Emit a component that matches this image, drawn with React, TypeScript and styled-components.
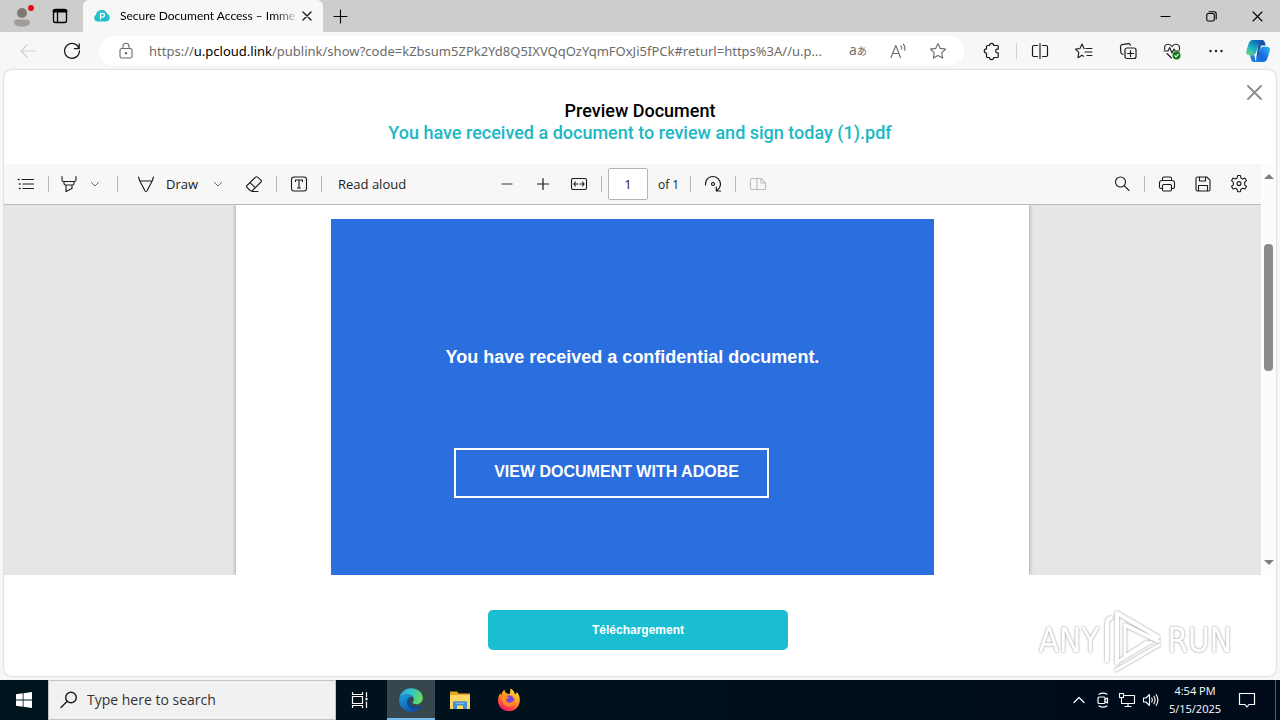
import React from "react";
import styled, { createGlobalStyle, css } from "styled-components";

const ui = `"Open Sans", "Noto Sans", sans-serif`;

const GlobalStyle = createGlobalStyle`
  *, *::before, *::after { box-sizing: border-box; }
  body { margin: 0; background: #f7f7f7; font-family: ${ui}; color: #1b1b1b; }
  button { border: 0; padding: 0; background: none; font: inherit; color: inherit; cursor: pointer; }
`;

const Desktop = styled.div`
  display: flex;
  flex-direction: column;
  min-height: 100vh;
`;

/* ---------- shared ---------- */

const IconButton = styled.button<{ $w?: number; $h?: number; $color?: string }>`
  display: flex;
  flex: none;
  align-items: center;
  justify-content: center;
  width: ${(p) => p.$w ?? 36}px;
  height: ${(p) => p.$h ?? 32}px;
  color: ${(p) => p.$color ?? "#1b1b1b"};
`;

type IconProps = { size?: number; w?: number; children: React.ReactNode };

const Icon = ({ size = 20, w = 1.1, children }: IconProps) => (
  <svg
    width={size}
    height={size}
    viewBox={`0 0 ${size} ${size}`}
    fill="none"
    stroke="currentColor"
    strokeWidth={w}
    strokeLinecap="round"
    strokeLinejoin="round"
    aria-hidden="true"
  >
    {children}
  </svg>
);

/* ---------- title bar ---------- */

const TitleBar = styled.header`
  display: flex;
  height: 32px;
  background: #cdcdcd;
`;

const Tab = styled.div`
  display: flex;
  align-items: center;
  width: 240px;
  margin-left: 7px;
  padding: 0 4px 0 11px;
  border-radius: 6px 6px 0 0;
  background: #f7f7f7;
`;

const TabTitle = styled.span`
  flex: 1;
  min-width: 0;
  margin-left: 10px;
  overflow: hidden;
  white-space: nowrap;
  font-family: Lato, "Open Sans", sans-serif;
  font-size: 12px;
  line-height: 16px;
  color: #000;
  mask-image: linear-gradient(to right, #000 88%, rgba(0, 0, 0, 0.2));
`;

const WindowControls = styled.div`
  display: flex;
  margin-left: auto;
`;

/* ---------- address row ---------- */

const AddressRow = styled.nav`
  display: flex;
  align-items: center;
  height: 37px;
  padding: 0 2px 0 6px;
`;

const AddressBar = styled.div`
  display: flex;
  flex: 1;
  align-items: center;
  min-width: 0;
  height: 30px;
  margin: 0 6px 0 5px;
  padding: 0 6px 0 4px;
  border-radius: 15px;
  background: #fff;
`;

const Url = styled.div`
  flex: 1;
  min-width: 0;
  padding-right: 4px;
  overflow: hidden;
  text-overflow: ellipsis;
  white-space: nowrap;
  font-family: "Noto Sans", "Open Sans", sans-serif;
  font-size: 13px;
  line-height: 20px;
  color: #6b6b6b;

  b { font-weight: 400; color: #000; }
`;

const Translate = styled.span`
  font-family: "Open Sans", "Noto Sans CJK JP", sans-serif;
  font-size: 14px;
  line-height: 16px;
  small { font-size: 10px; }
`;

const Divider = styled.span<{ $w?: number; $gap?: number; $color?: string }>`
  display: flex;
  flex: none;
  justify-content: center;
  width: ${(p) => p.$w ?? 9}px;
  height: 16px;
  margin-left: ${(p) => p.$gap ?? 0}px;

  &::before {
    content: "";
    width: 1px;
    background: ${(p) => p.$color ?? "#b8b8b8"};
  }
`;

/* ---------- preview dialog ---------- */

const Dialog = styled.main`
  display: flex;
  flex: 1;
  flex-direction: column;
  margin: 1px 4px 4px;
  border-radius: 8px;
  background: #fff;
  box-shadow: 0 0 2px rgba(0, 0, 0, 0.3);
`;

const DialogHeader = styled.div`
  display: grid;
  grid-template-columns: 1fr auto 1fr;
  height: 94px;
  padding-top: 30px;
`;

const DialogTitle = styled.h1`
  grid-column: 2;
  margin: 0;
  text-align: center;
  font: 500 18px/22px Roboto, sans-serif;
  color: #000;

  span { display: block; color: #20b7c4; }
`;

const CloseSlot = styled.div`
  justify-self: end;
  margin: -24px 6px 0 0;
`;

const Viewer = styled.section`
  display: flex;
  flex: 1;
  min-height: 411px;
`;

const ViewerMain = styled.div`
  display: flex;
  flex: 1;
  flex-direction: column;
  min-width: 0;
`;

const PdfToolbar = styled.div`
  display: grid;
  grid-template-columns: 1fr auto 1fr;
  height: 41px;
  padding: 0 4px;
  border-bottom: 1px solid #bcbcbc;
  background: #f7f7f7;
  font-size: 13px;
`;

const ToolGroup = styled.div<{ $end?: boolean }>`
  display: flex;
  align-items: center;
  justify-content: ${(p) => (p.$end ? "flex-end" : "flex-start")};
`;

const ToolButton = styled.button`
  display: flex;
  align-items: center;
  height: 32px;
  white-space: nowrap;
`;

const DrawButton = styled(ToolButton)`
  width: 80px;
  margin-left: 6px;
  padding-left: 8px;
  gap: 10px;
`;

const EraseButton = styled(IconButton)`
  margin-left: 8px;
`;

const ReadAloud = styled(ToolButton)`
  margin-left: 12px;
`;

const PageInput = styled.input`
  width: 40px;
  height: 32px;
  margin-left: 2px;
  padding: 0;
  border: 1px solid #b5b5b5;
  border-radius: 2px;
  background: #fff;
  text-align: center;
  font: 13px/20px ${ui};
  color: #1b1b1b;
`;

const PageCount = styled.span`
  width: 20px;
  margin: 0 8px 0 10px;
  white-space: nowrap;
  font-size: 12px;
`;

const PdfCanvas = styled.div`
  display: flex;
  flex: 1;
  justify-content: center;
  overflow: hidden;
  background: #e6e6e6;
`;

const PdfPage = styled.article`
  display: flex;
  justify-content: center;
  width: 793px;
  padding-top: 14px;
  background: #fff;
  box-shadow: 0 0 4px rgba(0, 0, 0, 0.4);
`;

const BluePanel = styled.div`
  display: flex;
  flex-direction: column;
  align-items: center;
  width: 603px;
  padding-top: 126px;
  background: #2b6ede;
  color: #fff;
  font-family: "Liberation Sans", Arial, sans-serif;
`;

const PdfHeading = styled.h2`
  margin: 0;
  font-size: 18px;
  line-height: 24px;
`;

const AdobeLink = styled.a`
  width: 315px;
  height: 50px;
  margin: 79px 42px 0 0;
  padding-left: 10px;
  border: 2px solid #fff;
  text-align: center;
  text-decoration: none;
  font-size: 16px;
  font-weight: 700;
  line-height: 44px;
  color: #fff;
`;

const ScrollTrack = styled.div`
  display: flex;
  flex: none;
  flex-direction: column;
  align-items: center;
  width: 15px;
  padding: 10px 0;
  background: #fcfcfc;
`;

const ScrollThumb = styled.div`
  width: 9px;
  height: 127px;
  margin: 65px 0 auto;
  border-radius: 4px;
  background: #8b8b8b;
`;

const ScrollArrow = styled.span<{ $down?: boolean }>`
  width: 0;
  height: 0;
  border: 5px solid transparent;
  ${(p) =>
    p.$down
      ? css`border-top-color: #7f7f7f; border-bottom: 0;`
      : css`border-bottom-color: #7f7f7f; border-top: 0;`}
`;

const DialogFooter = styled.div`
  display: flex;
  justify-content: center;
  height: 101px;
  padding: 35px 4px 0 0;
`;

const DownloadButton = styled.button`
  width: 300px;
  height: 40px;
  border-radius: 5px;
  background: #1abed2;
  color: #fff;
  font: 700 12px/16px "Liberation Sans", Arial, sans-serif;
`;

const Watermark = styled.div`
  position: absolute;
  right: 48px;
  bottom: 46px;
  display: flex;
  align-items: center;
  height: 66px;
  gap: 5px;
  font: 400 33px/40px "DejaVu Sans Condensed", Roboto, sans-serif;
  color: #fff;
  pointer-events: none;
  filter: drop-shadow(0 0 1px rgba(0, 0, 0, 0.3)) drop-shadow(0 0 1px rgba(0, 0, 0, 0.15));
`;

/* ---------- taskbar ---------- */

const Taskbar = styled.footer`
  display: flex;
  height: 40px;
  background: linear-gradient(to right, #00161e, #000a1a);
  color: #fff;
`;

const SearchBox = styled.label`
  display: flex;
  align-items: center;
  width: 288px;
  padding-left: 10px;
  gap: 8px;
  border: 1px solid #c4c4c4;
  background: #f1f1f1;
  color: #1b1b1b;
`;

const SearchInput = styled.input`
  flex: 1;
  min-width: 0;
  border: 0;
  padding: 0;
  background: none;
  font: 14px/20px ${ui};

  &::placeholder { color: #333; opacity: 1; }
`;

const TaskButton = styled.button<{ $active?: boolean }>`
  display: flex;
  align-items: center;
  justify-content: center;
  width: 48px;
  height: 40px;
  ${(p) =>
    p.$active &&
    css`
      background: #37474e;
      box-shadow: inset 0 -2px #76b9ed;
    `}
`;

const Apps = styled.div`
  display: flex;
  gap: 1px;
  margin-left: 3px;
`;

const Tray = styled.div`
  display: flex;
  align-items: center;
  margin-left: auto;
`;

const Clock = styled.time`
  width: 64px;
  text-align: center;
  white-space: nowrap;
  font-size: 11px;
  line-height: 18px;
`;

const ShowDesktop = styled.button`
  width: 5px;
  height: 40px;
  margin-left: 8px;
  border-left: 1px solid #56606b;
`;

/* ---------- drawings ---------- */

const Avatar = () => (
  <svg width="24" height="24" viewBox="0 0 24 24" aria-hidden="true">
    <circle cx="12" cy="9" r="5" fill="#7d7975" />
    <path d="M4 18.500c0-2 1.500-3 3.500-3h9c2 0 3.500 1 3.500 3 0 2.500-3.500 4-8 4s-8-1.500-8-4z" fill="#a19d99" />
    <circle cx="21" cy="4" r="3" fill="#e00b1c" />
  </svg>
);

const CloudLogo = () => (
  <svg width="16" height="16" viewBox="0 0 16 16" aria-hidden="true">
    <path d="M3.500 13.500A3.600 3.600 0 0 1 2 6.800 5.800 5.800 0 0 1 13 5.500a4.200 4.200 0 0 1-.6 8z" fill="#20bec6" />
    <path d="M6.500 11.500v-6h2.200a1.800 1.800 0 0 1 0 3.600H6.500" fill="none" stroke="#fff" strokeWidth="1.300" />
  </svg>
);

const Copilot = () => (
  <svg width="26" height="26" viewBox="0 0 26 26" aria-hidden="true">
    <defs>
      <linearGradient id="cpA" x1="0" y1="1" x2="0.700" y2="0">
        <stop offset="0" stopColor="#7fdc6c" />
        <stop offset="0.450" stopColor="#22b8c0" />
        <stop offset="1" stopColor="#0d63b8" />
      </linearGradient>
      <linearGradient id="cpB" x1="1" y1="0" x2="0" y2="1">
        <stop offset="0" stopColor="#2bb4f3" />
        <stop offset="0.600" stopColor="#1766dc" />
        <stop offset="1" stopColor="#1583e8" />
      </linearGradient>
    </defs>
    <path d="M14 2h3c1.800 0 2.600 1.200 3 3l.8 2.500H16L13.500 17c-.6 2.500-1 4-2.500 5l3-20z" fill="#15569f" />
    <path d="M8 2h8.500c-1.500.6-2 2-2.500 3.500l-3 9c-.7 2-1.500 2.700-3.500 2.700H4C1.600 17.200.7 15.500 1.300 13L3.500 6C4.300 3.500 5.500 2 8 2z" fill="url(#cpA)" />
    <path d="M18 24H9.500c1.500-.6 2-2 2.500-3.500l3-9c.7-2 1.500-2.700 3.500-2.700H22c2.400 0 3.300 1.700 2.700 4.200L22.500 20c-.8 2.500-2 4-4.500 4z" fill="url(#cpB)" />
    <path d="M5 17.200h4.500l.7 4c.2 1.300.6 2.300 1.800 2.800H9c-1.800 0-2.600-1.200-3-3z" fill="#1a7fe0" />
  </svg>
);

const EdgeLogo = () => (
  <svg width="24" height="24" viewBox="0 0 24 24" aria-hidden="true">
    <defs>
      <linearGradient id="edTop" x1="0" y1="0.300" x2="1" y2="0.500">
        <stop offset="0" stopColor="#2aa7e0" />
        <stop offset="0.500" stopColor="#34c5c9" />
        <stop offset="1" stopColor="#6bdc55" />
      </linearGradient>
      <linearGradient id="edLeft" x1="0" y1="0" x2="0.400" y2="1">
        <stop offset="0" stopColor="#1fa0df" />
        <stop offset="1" stopColor="#0f5bb5" />
      </linearGradient>
    </defs>
    <path d="M.2 11C1 4.500 6 .2 12 .2c6.500 0 11.800 4.300 11.800 9.800 0 3.700-2.700 6.300-6.300 6.300-2.300 0-4-.8-4-1.700 0-.6 1.300-1.200 1.300-3.200C14.800 8.500 11.500 6.500 8 6.500 4 6.500 1 8.500.2 11z" fill="url(#edTop)" />
    <path d="M.2 11.500C1 8.500 4.300 6.500 8 6.500c2.500 0 4.500 1 5.600 2.300-3.200-.7-5.200 1.700-5.200 4.900 0 4.500 3.600 8.100 8.200 8.100 1 0 1.600-.1 2.400-.4-2 1.600-4.300 2.400-7 2.400C5 23.800-.4 18 .2 11.500z" fill="url(#edLeft)" />
    <path d="M10.500 9.500c-2 3-.9 8.900 5.700 9.500 2.500.2 4.600-.4 6-1.200.5-.2.700.2.500.6-1.500 2.500-4 3.700-6.700 3.700-4.500 0-8-3.900-8-8.200 0-2 .9-3.700 2.500-4.400z" fill="#124a9c" />
  </svg>
);

const FolderLogo = () => (
  <svg width="24" height="22" viewBox="0 0 24 22" aria-hidden="true">
    <path d="M2 2.500h7l1.500 2H22v15H2z" fill="#e8a820" />
    <path d="M2 6h20v14H2z" fill="#fcd767" />
    <path d="M5 20v-6.500c0-.8.500-1.300 1.300-1.300h11.400c.8 0 1.300.5 1.300 1.300V20h-4v-3.500H9V20z" fill="#3f8fcb" />
    <path d="M7.500 14.200h9" stroke="#7fc0ea" strokeWidth="1.200" />
  </svg>
);

const FirefoxLogo = () => (
  <svg width="24" height="24" viewBox="0 0 24 24" aria-hidden="true">
    <defs>
      <linearGradient id="ff" x1="0.800" y1="0" x2="0.300" y2="1">
        <stop offset="0" stopColor="#ffe14d" />
        <stop offset="0.450" stopColor="#ff9a1f" />
        <stop offset="0.750" stopColor="#ff4a3f" />
        <stop offset="1" stopColor="#e4156f" />
      </linearGradient>
    </defs>
    <path d="M13.500.5c3 1.700 4.200 4 4.400 5.700C19 6 19.800 5 19.800 4c2 2 3.200 5 3 8.500C22.500 18.700 18 23.300 12 23.300S1 18.700 1 12.800C1 9.500 2 7 3.500 5c0 1.200.3 2 .8 2.500C4.600 5 5.800 3 7.500 1.500c0 2 1 3.500 3 4.300 1.500.6 2.200.2 2.500-.8.300-1.300.2-3 .5-4.500z" fill="url(#ff)" />
    <circle cx="12" cy="12.500" r="5.300" fill="#7542e5" />
    <path d="M5 9c2-1.500 4.500-1.500 7.500.7-1.500.3-3 .8-3.200 2.300-.2 2 2 3 4 2.600 1.600-.3 2.700-1 3.700-2.600.5 4.500-2.800 7-6 6.500C7 18 4.700 14 5 9z" fill="#ff8a26" />
  </svg>
);

const RunMark = () => (
  <svg width="58" height="64" viewBox="0 0 58 64" fill="none" stroke="#fff" strokeWidth="4" strokeLinejoin="round" strokeLinecap="round" aria-hidden="true">
    <path d="M3 52V14q0-4 4-5" />
    <path d="M21 16l33 16M13 54V4l41 24" />
    <path d="M21 47V18M21 47l22-14" strokeWidth="3" />
    <path d="M12 61l43-25M13 53l34-20" strokeWidth="3" />
  </svg>
);

const Chevron = () => (
  <Icon size={10} w={1}><path d="M1.500 3.500 5 7l3.500-3.500" /></Icon>
);

const Cross = ({ size = 12, w = 1.2 }: { size?: number; w?: number }) => (
  <Icon size={size} w={w}><path d={`M1 1 ${size - 1} ${size - 1}M${size - 1} 1 1 ${size - 1}`} /></Icon>
);

const star = "M10 2.500l2.300 4.900 5.300.7-3.900 3.700 1 5.300L10 14.500l-4.700 2.600 1-5.300-3.900-3.700 5.300-.7z";

/* ---------- page ---------- */

export default function App() {
  return (
    <Desktop>
      <GlobalStyle />
      <TitleBar>
        <IconButton $w={44} aria-label="Profile"><Avatar /></IconButton>
        <IconButton $w={32} $color="#000" aria-label="Tab actions">
          <Icon w={1.300}><rect x="3.500" y="3.500" width="13" height="13" rx="2" /><path d="M4 5h12" strokeWidth="3" /><path d="M7.500 6v10" /></Icon>
        </IconButton>
        <Tab>
          <CloudLogo />
          <TabTitle>Secure Document Access – Imme</TabTitle>
          <IconButton $w={24} aria-label="Close tab"><Cross size={10} w={1.400} /></IconButton>
        </Tab>
        <IconButton $w={34} $color="#000" aria-label="New tab">
          <Icon size={15}><path d="M7.500 1v13M1 7.500h13" /></Icon>
        </IconButton>
        <WindowControls>
          <IconButton $w={46} $color="#000" aria-label="Minimize"><Icon size={11}><path d="M1 5.500h9" /></Icon></IconButton>
          <IconButton $w={46} $color="#000" aria-label="Restore">
            <Icon size={11}><rect x="0.800" y="2.500" width="7.500" height="7.500" rx="1.500" /><path d="M3 .8h5a2.200 2.200 0 0 1 2.200 2.200v5" /></Icon>
          </IconButton>
          <IconButton $w={46} $color="#000" aria-label="Close window"><Cross size={11} w={1.100} /></IconButton>
        </WindowControls>
      </TitleBar>

      <AddressRow>
        <IconButton $w={44} $color="#cfcfcf" aria-label="Back"><Icon><path d="M17.500 10H3M9 4l-6 6 6 6" /></Icon></IconButton>
        <IconButton $w={44} aria-label="Reload">
          <Icon w={1.300}><path d="M17 7.500A7.400 7.400 0 1 0 17.400 10M17.200 3v4.700h-4.700" /></Icon>
        </IconButton>
        <AddressBar>
          <IconButton $w={46} $h={28} $color="#6b6b6b" aria-label="Site information">
            <Icon><rect x="4" y="7.500" width="12" height="9.500" rx="1.800" /><path d="M7 7.500V5.300a3 3 0 0 1 6 0v2.200" /><circle cx="10" cy="12.300" r="0.700" fill="currentColor" /></Icon>
          </IconButton>
          <Url role="textbox" aria-label="Address">
            https://<b>u.pcloud.link</b>/publink/show?code=kZbsum5ZPk2Yd8Q5IXVQqOzYqmFOxJi5fPCk#returl=https%3A//u.p...
          </Url>
          <IconButton $w={40} $h={28} $color="#6b6b6b" aria-label="Translate"><Translate>a<small>あ</small></Translate></IconButton>
          <IconButton $w={40} $h={28} $color="#6b6b6b" aria-label="Read page aloud">
            <Icon><path d="M3 16.500 7.800 4.500l4.700 12M4.700 12.500h6.200M12.800 4.800q1.300 1.500 1 3.500M15.300 3.200q2.300 2.600 1.500 6" /></Icon>
          </IconButton>
          <IconButton $w={40} $h={28} $color="#6b6b6b" aria-label="Add to favorites"><Icon><path d={star} /></Icon></IconButton>
        </AddressBar>
        <IconButton $w={44} aria-label="Extensions">
          <Icon w={1.200}><path d="M5.300 4.500H7.500a2.100 2.100 0 0 1 4.200 0h3.500a1 1 0 0 1 1 1V8.200h-.8a1.800 1.800 0 0 0 0 3.600h.8v3.700a1 1 0 0 1-1 1h-3.500a2.100 2.100 0 0 1-4.200 0H5.500a1 1 0 0 1-1-1v-3.300a2.200 2.200 0 0 1 0-4.400V5.500a1 1 0 0 1 1-1" /></Icon>
        </IconButton>
        <Divider $w={4} $color="#d2d2d2" />
        <IconButton $w={44} aria-label="Split screen">
          <Icon w={1.200}><path d="M7.500 4.500H4A1.500 1.500 0 0 0 2.500 6v8A1.500 1.500 0 0 0 4 15.500h3.500M12.500 4.500H16A1.500 1.500 0 0 1 17.500 6v8a1.500 1.500 0 0 1-1.500 1.500h-3.500M10 2.500v15" /></Icon>
        </IconButton>
        <IconButton $w={44} aria-label="Favorites">
          <Icon><path d="M10.500 7.500H10L8 3 6 7.500l-4.500.6 3.300 3.200L4 16.700l4-2.400 1.500.9M12 7.500h6M11 11h7M13 14.500h5" /></Icon>
        </IconButton>
        <IconButton $w={44} aria-label="Collections">
          <Icon w={1.200}><rect x="7" y="7" width="11" height="10.500" rx="2" /><path d="M12.500 9.500v6M9.500 12.500h6M5 13.300l-.9-.3a2 2 0 0 1-1.300-2.300L2.500 6a2 2 0 0 1 1.700-2.300l6-1a2 2 0 0 1 2.200 1.500" /></Icon>
        </IconButton>
        <IconButton $w={44} aria-label="Browser essentials">
          <Icon>
            <path d="M2.800 8.500C1.800 5.500 3.500 3.200 6 3.200c1.800 0 3.200 1 4 2.400.8-1.400 2.200-2.400 4-2.400 2.500 0 4.200 2.300 3.400 5.300M2 10h4l1.700-3.500L10 12l2-4 1 2h4.500M5 12.500l4.500 4.500" />
            <circle cx="14.500" cy="14.500" r="4" fill="#107c10" stroke="none" />
            <path d="M12.800 14.600l1.200 1.200 2.300-2.500" stroke="#fff" />
          </Icon>
        </IconButton>
        <IconButton $w={44} aria-label="Settings and more">
          <Icon><g fill="currentColor" stroke="none"><circle cx="4.500" cy="10" r="1.200" /><circle cx="10" cy="10" r="1.200" /><circle cx="15.500" cy="10" r="1.200" /></g></Icon>
        </IconButton>
        <IconButton $w={40} aria-label="Copilot"><Copilot /></IconButton>
      </AddressRow>

      <Dialog>
        <DialogHeader>
          <DialogTitle>
            Preview Document
            <span>You have received a document to review and sign today (1).pdf</span>
          </DialogTitle>
          <CloseSlot>
            <IconButton $w={32} $color="#8c8c8c" aria-label="Close preview"><Cross size={15} w={1.800} /></IconButton>
          </CloseSlot>
        </DialogHeader>

        <Viewer>
          <ViewerMain>
            <PdfToolbar>
              <ToolGroup>
                <IconButton aria-label="Contents">
                  <Icon><path d="M6 5.500h11.500M7 10h10.500M7 14.500h10.500" /><path d="M2.500 5.500h.5M3.500 10h.5M3.500 14.500h.5" strokeWidth="1.600" /></Icon>
                </IconButton>
                <Divider />
                <IconButton $w={32} aria-label="Highlight">
                  <Icon><path d="M3 2.500V6a1.500 1.500 0 0 0 1.500 1.500h11A1.500 1.500 0 0 0 17 6V2.500M5 7.500v2A1.500 1.500 0 0 0 6.500 11h7a1.500 1.500 0 0 0 1.500-1.500v-2M7 11v6.500l6-3V11" /></Icon>
                </IconButton>
                <IconButton $w={20} $color="#666" aria-label="Highlight options"><Chevron /></IconButton>
                <Divider $gap={8} />
                <DrawButton>
                  <Icon><path d="M2.500 3l1.300 4h12.400l1.300-4M3.800 7l5.300 10q.9 1 1.800 0l5.300-10" /></Icon>
                  Draw
                </DrawButton>
                <IconButton $w={20} $color="#666" aria-label="Draw options"><Chevron /></IconButton>
                <EraseButton aria-label="Erase">
                  <Icon><path d="M11.500 3.200 3 11.500a1.300 1.300 0 0 0 0 1.800l3.200 3.200a1.500 1.500 0 0 0 2.200 0L17 8a1.300 1.300 0 0 0 0-1.800l-3.500-3a1.400 1.400 0 0 0-2 0zM6 8.700l5.200 5M8 17.500h6" /></Icon>
                </EraseButton>
                <Divider />
                <IconButton aria-label="Add text">
                  <Icon><rect x="2.500" y="3" width="15" height="14" rx="2.500" /><path d="M6.500 7.500V6h7v1.500M10 6v8M8.500 14h3" /></Icon>
                </IconButton>
                <Divider />
                <ReadAloud>Read aloud</ReadAloud>
              </ToolGroup>
              <ToolGroup>
                <IconButton aria-label="Zoom out" $color="#777"><Icon w={1.300}><path d="M5 10h10" /></Icon></IconButton>
                <IconButton aria-label="Zoom in"><Icon w={1.200}><path d="M4.500 10h11M10 4.500v11" /></Icon></IconButton>
                <IconButton aria-label="Fit to width">
                  <Icon><rect x="2.500" y="4.500" width="15" height="11" rx="1.500" /><path d="M5 10h4M11 10h4M6.500 8 4.800 10l1.700 2M13.500 8l1.700 2-1.700 2" /></Icon>
                </IconButton>
                <Divider />
                <PageInput type="text" aria-label="Page number" defaultValue="1" />
                <PageCount>of 1</PageCount>
                <Divider />
                <IconButton aria-label="Rotate">
                  <Icon w={1.200}><path d="M2.500 11A7.500 7.500 0 1 1 14 16.300M17.500 17h-4.200v-4" /><circle cx="10" cy="10" r="1.500" /></Icon>
                </IconButton>
                <Divider />
                <IconButton $color="#bdbdbd" aria-label="Page view">
                  <Icon><path d="M9 4.500H4A1.500 1.500 0 0 0 2.500 6v8A1.500 1.500 0 0 0 4 15.500h12a1.500 1.500 0 0 0 1.500-1.500V9L13 4.500H9v11M13 4.500V9h4.500" /></Icon>
                </IconButton>
              </ToolGroup>
              <ToolGroup $end>
                <IconButton aria-label="Find"><Icon><circle cx="8.500" cy="8" r="5" /><path d="M12.200 11.700 17 16.500" /></Icon></IconButton>
                <Divider />
                <IconButton aria-label="Print">
                  <Icon><path d="M5.500 6V4.500A1.500 1.500 0 0 1 7 3h6a1.500 1.500 0 0 1 1.500 1.500V6M5.500 14.500H4A1.500 1.500 0 0 1 2.500 13V8.500a2.200 2.200 0 0 1 2-2h11a2.200 2.200 0 0 1 2 2V13a1.500 1.500 0 0 1-1.500 1.500h-1.500" /><rect x="5.500" y="10.500" width="9" height="6.500" rx="1.200" /></Icon>
                </IconButton>
                <IconButton aria-label="Save">
                  <Icon><path d="M3 4.500A1.500 1.500 0 0 1 4.500 3h9.300L17 6.200v9.300a1.500 1.500 0 0 1-1.500 1.500h-11A1.500 1.500 0 0 1 3 15.500zM6.500 3v4h6V3M5.500 17v-5.500h9V17" /></Icon>
                </IconButton>
                <IconButton aria-label="Settings">
                  <Icon><path d="M8.600 1.500h2.800l.5 2.500 1.700 1 2.400-.9L17.500 6.700l-1.900 1.700v2.400l1.900 1.700-1.500 2.600-2.400-.9-1.700 1-.5 2.500H8.600l-.5-2.500-1.700-1-2.400.9-1.500-2.600 1.900-1.700V8.400L2.500 6.700 4 4.100l2.400.9 1.700-1z" /><circle cx="10" cy="9.600" r="2" /></Icon>
                </IconButton>
              </ToolGroup>
            </PdfToolbar>
            <PdfCanvas>
              <PdfPage>
                <BluePanel>
                  <PdfHeading>You have received a confidential document.</PdfHeading>
                  <AdobeLink href="#document">VIEW DOCUMENT WITH ADOBE</AdobeLink>
                </BluePanel>
              </PdfPage>
            </PdfCanvas>
          </ViewerMain>
          <ScrollTrack>
            <ScrollArrow />
            <ScrollThumb />
            <ScrollArrow $down />
          </ScrollTrack>
        </Viewer>

        <DialogFooter>
          <DownloadButton>Téléchargement</DownloadButton>
        </DialogFooter>
      </Dialog>

      <Watermark>
        <span>ANY</span>
        <RunMark />
        <span>RUN</span>
      </Watermark>

      <Taskbar>
        <TaskButton aria-label="Start">
          <svg width="16" height="16" viewBox="0 0 16 16" fill="#fff" aria-hidden="true">
            <path d="M0 2.200 6.700 1.300v6.300H0zM7.500 1.200 16 0v7.600H7.500zM0 8.400h6.700v6.300L0 13.800zM7.500 8.400H16V16l-8.500-1.200z" />
          </svg>
        </TaskButton>
        <SearchBox>
          <Icon size={20} w={1.400}><circle cx="12" cy="7.500" r="5.300" /><path d="M8.200 11.300 2 17.500" /></Icon>
          <SearchInput type="text" placeholder="Type here to search" aria-label="Search" />
        </SearchBox>
        <TaskButton aria-label="Task view">
          <Icon size={18} w={1.200}><path d="M1.500 1.500v2h10v-2M1.500 16.500v-2h10v2M15.500 1.500v4M15.500 11v5.500" /><rect x="1.500" y="5.500" width="10" height="7" /><path d="M14.500 8h2" strokeWidth="2.500" strokeLinecap="butt" /></Icon>
        </TaskButton>
        <Apps>
          <TaskButton $active aria-label="Microsoft Edge"><EdgeLogo /></TaskButton>
          <TaskButton aria-label="File Explorer"><FolderLogo /></TaskButton>
          <TaskButton aria-label="Firefox"><FirefoxLogo /></TaskButton>
        </Apps>
        <Tray>
          <IconButton $w={24} $color="#fff" aria-label="Show hidden icons"><Icon size={12} w={1.200}><path d="M1 8.500l5-5 5 5" /></Icon></IconButton>
          <IconButton $w={24} $color="#fff" aria-label="Meet now">
            <Icon size={16} w={1.200}><rect x="3" y="5" width="7" height="6.500" rx="1" /><path d="M10 7.500l2.500-1.500v5L10 9.500M4 2.200q4-2.200 8 0M4 14q4 2.200 8 0" /></Icon>
          </IconButton>
          <IconButton $w={24} $color="#fff" aria-label="Network">
            <Icon size={18}><path d="M6.500 4.500H16.500v8H3.500V8M10 12.500v3M7 15.500h6" /><rect x="1.500" y="2.500" width="4" height="4" /><path d="M3.500 6.500V8" /></Icon>
          </IconButton>
          <IconButton $w={24} $color="#fff" aria-label="Volume">
            <Icon size={18}><path d="M1.500 7v4H4l3.500 3.500v-11L4 7zM9.700 7q1.200 2 0 4M11.900 5.300q2.300 3.700 0 7.400M14.100 3.500q3.600 5.500 0 11" /></Icon>
          </IconButton>
          <Clock>4:54 PM<br />5/15/2025</Clock>
          <IconButton $w={40} $color="#fff" aria-label="Notifications">
            <Icon size={18} w={1.200}><path d="M1.500 2.500h15v11H11l-2 2.500-2-2.500H1.500z" /></Icon>
          </IconButton>
          <ShowDesktop aria-label="Show desktop" />
        </Tray>
      </Taskbar>
    </Desktop>
  );
}
